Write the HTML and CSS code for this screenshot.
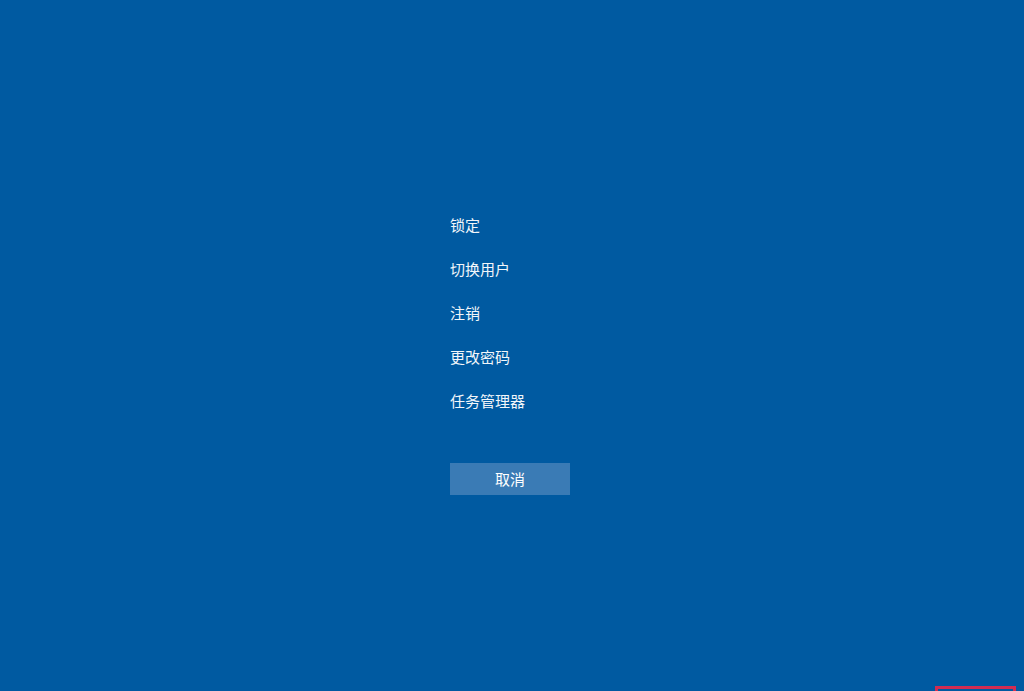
FILE: index.html
```html
<!DOCTYPE html>
<html lang="zh-CN">
<head>
<meta charset="utf-8">
<title>安全选项</title>
<link rel="stylesheet" href="styles.css">
</head>
<body>
<main class="screen">
  <nav class="options">
    <div class="option">锁定</div>
    <div class="option">切换用户</div>
    <div class="option">注销</div>
    <div class="option">更改密码</div>
    <div class="option">任务管理器</div>
    <button class="cancel">取消</button>
  </nav>
  <div class="highlight"></div>
</main>
</body>
</html>
```
FILE: styles.css
```css
html, body {
  margin: 0;
  padding: 0;
  width: 1024px;
  height: 691px;
  overflow: hidden;
  background: #005aa1;
}
.screen {
  position: relative;
  width: 1024px;
  height: 691px;
  box-sizing: border-box;
  padding-top: 203px;
  padding-left: 450px;
  font-family: "Microsoft YaHei", "Noto Sans CJK SC", "Noto Sans", sans-serif;
  color: #ffffff;
}
.options {
  display: flex;
  flex-direction: column;
  align-items: flex-start;
}
.option {
  height: 44px;
  line-height: 44px;
  font-size: 15px;
  color: #f2f6fa;
}
.cancel {
  margin-top: 40px;
  width: 120px;
  height: 32px;
  border: 0;
  padding: 0;
  background: #3a7bb5;
  color: #ffffff;
  font-family: inherit;
  font-size: 15px;
  line-height: 32px;
  text-align: center;
}
.highlight {
  position: absolute;
  left: 935px;
  top: 686px;
  width: 81px;
  height: 30px;
  box-sizing: border-box;
  border: 3px solid #d22c52;
}
```
